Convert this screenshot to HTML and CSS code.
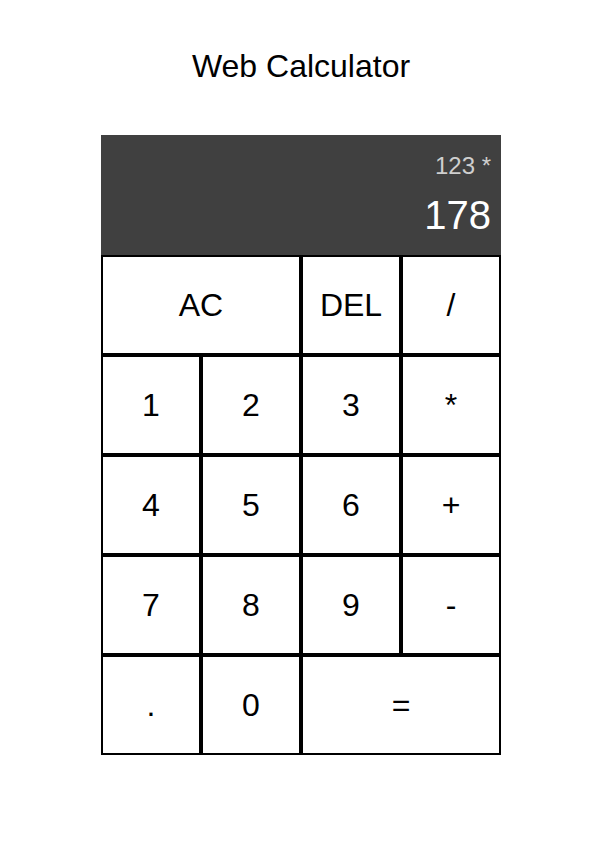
FILE: index.html
```html
<!DOCTYPE html>
<html lang="en">
<head>
<meta charset="utf-8">
<title>Web Calculator</title>
<link rel="stylesheet" href="styles.css">
</head>
<body>
<main class="page">
  <h1 class="title">Web Calculator</h1>
  <div class="calculator">
    <div class="output">
      <div class="previous">123 *</div>
      <div class="current">178</div>
    </div>
    <button class="key span-two">AC</button>
    <button class="key">DEL</button>
    <button class="key">/</button>
    <button class="key">1</button>
    <button class="key">2</button>
    <button class="key">3</button>
    <button class="key">*</button>
    <button class="key">4</button>
    <button class="key">5</button>
    <button class="key">6</button>
    <button class="key">+</button>
    <button class="key">7</button>
    <button class="key">8</button>
    <button class="key">9</button>
    <button class="key">-</button>
    <button class="key">.</button>
    <button class="key">0</button>
    <button class="key span-two">=</button>
  </div>
</main>
</body>
</html>
```

FILE: styles.css
```css
*, *::before, *::after {
  box-sizing: border-box;
}

body {
  margin: 0;
  padding: 0 0 0 9px;
  background: #ffffff;
  font-family: "Liberation Sans", Arial, sans-serif;
}

.page {
  display: flex;
  flex-direction: column;
  align-items: center;
}

.title {
  margin: 48px 0 50px;
  font-size: 32px;
  font-weight: normal;
  line-height: normal;
  color: #000000;
}

.calculator {
  display: grid;
  grid-template-columns: repeat(4, 100px);
  grid-template-rows: 120px repeat(5, 100px);
}

.output {
  grid-column: 1 / -1;
  background: #404040;
  display: flex;
  flex-direction: column;
  align-items: flex-end;
  justify-content: space-around;
  padding: 10px;
}

.previous {
  color: rgba(255, 255, 255, 0.75);
  font-size: 24px;
}

.current {
  color: #ffffff;
  font-size: 40px;
}

.key {
  font-family: "Liberation Sans", Arial, sans-serif;
  font-size: 32px;
  color: #000000;
  background: #ffffff;
  border: 2px solid #000000;
  padding: 0;
  margin: 0;
  cursor: pointer;
}

.span-two {
  grid-column: span 2;
}
```
